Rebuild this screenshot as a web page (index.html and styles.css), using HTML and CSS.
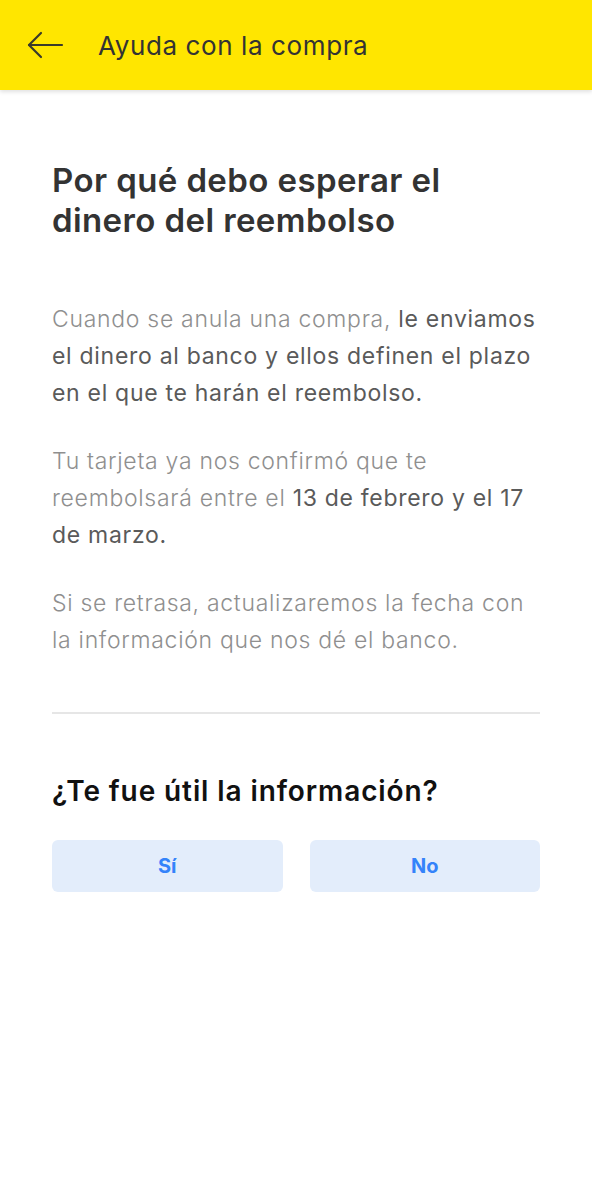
FILE: index.html
```html
<!DOCTYPE html>
<html lang="es">
<head>
  <meta charset="UTF-8" />
  <meta name="viewport" content="width=device-width, initial-scale=1.0" />
  <title>Ayuda con la compra</title>
  <link rel="stylesheet" href="styles.css">
</head>
<body>
  <header class="topbar">
    <button class="back-btn" aria-label="Volver">
      <svg width="38" height="30" viewBox="0 0 38 30" fill="none" stroke="#3a3a2a" stroke-width="2.2" stroke-linecap="round" stroke-linejoin="round">
        <path d="M36 15H3" />
        <path d="M15 3L3 15l12 12" />
      </svg>
    </button>
    <h1 class="topbar-title">Ayuda con la compra</h1>
  </header>

  <main class="content">
    <h2 class="article-title">Por qué debo esperar el dinero del reembolso</h2>

    <div class="article-body">
      <p>Cuando se anula una compra, <strong>le enviamos el dinero al banco y ellos definen el plazo en el que te harán el reembolso.</strong></p>
      <p>Tu tarjeta ya nos confirmó que te reembolsará entre el <strong>13 de febrero y el 17 de marzo.</strong></p>
      <p>Si se retrasa, actualizaremos la fecha con la información que nos dé el banco.</p>
    </div>

    <hr class="divider" />

    <section class="feedback">
      <h3 class="feedback-title">¿Te fue útil la información?</h3>
      <div class="feedback-actions">
        <button class="feedback-btn">Sí</button>
        <button class="feedback-btn">No</button>
      </div>
    </section>
  </main>
</body>
</html>
```

FILE: styles.css
```css
body {
  font-family: 'Inter', 'Open Sans', sans-serif;
  background: #fff;
  margin: 0;
  padding: 0;
  height: 100vh;
}

.topbar {
  background-color: #ffe600;
  height: 90px;
  display: flex;
  align-items: center;
  padding: 0 0 0 26px;
  box-shadow: 0 2px 4px rgba(0, 0, 0, 0.12);
}

.back-btn {
  background: none;
  border: none;
  padding: 0;
  margin: 0;
  width: 38px;
  height: 30px;
  cursor: pointer;
}

.back-btn svg {
  display: block;
}

.topbar-title {
  margin: 0 0 0 34px;
  font-size: 26px;
  font-weight: 400;
  letter-spacing: 0.6px;
  color: #333;
}

.content {
  padding: 0 52px;
}

.article-title {
  margin: 70px 0 0;
  font-size: 33px;
  line-height: 40px;
  font-weight: 600;
  letter-spacing: 0.4px;
  color: #333;
}

.article-body {
  margin-top: 61px;
}

.article-body p {
  margin: 0 0 31px;
  font-size: 23px;
  line-height: 37px;
  font-weight: 300;
  letter-spacing: 0.7px;
  color: #8f8f8f;
}

.article-body p:last-child {
  margin-bottom: 0;
}

.article-body strong {
  font-weight: 400;
  color: #5a5a5a;
}

.divider {
  border: none;
  border-top: 2px solid #e6e6e6;
  margin: 53px 0 0;
}

.feedback-title {
  margin: 60px 0 0;
  font-size: 28px;
  line-height: 34px;
  font-weight: 600;
  letter-spacing: 0.9px;
  color: #111;
}

.feedback-actions {
  display: grid;
  grid-template-columns: 1fr 1fr;
  gap: 27px;
  margin-top: 32px;
}

.feedback-btn {
  height: 52px;
  background-color: #e3edfb;
  color: #3483fa;
  border: none;
  border-radius: 6px;
  font-family: inherit;
  font-size: 20px;
  font-weight: 700;
  cursor: pointer;
}
```
